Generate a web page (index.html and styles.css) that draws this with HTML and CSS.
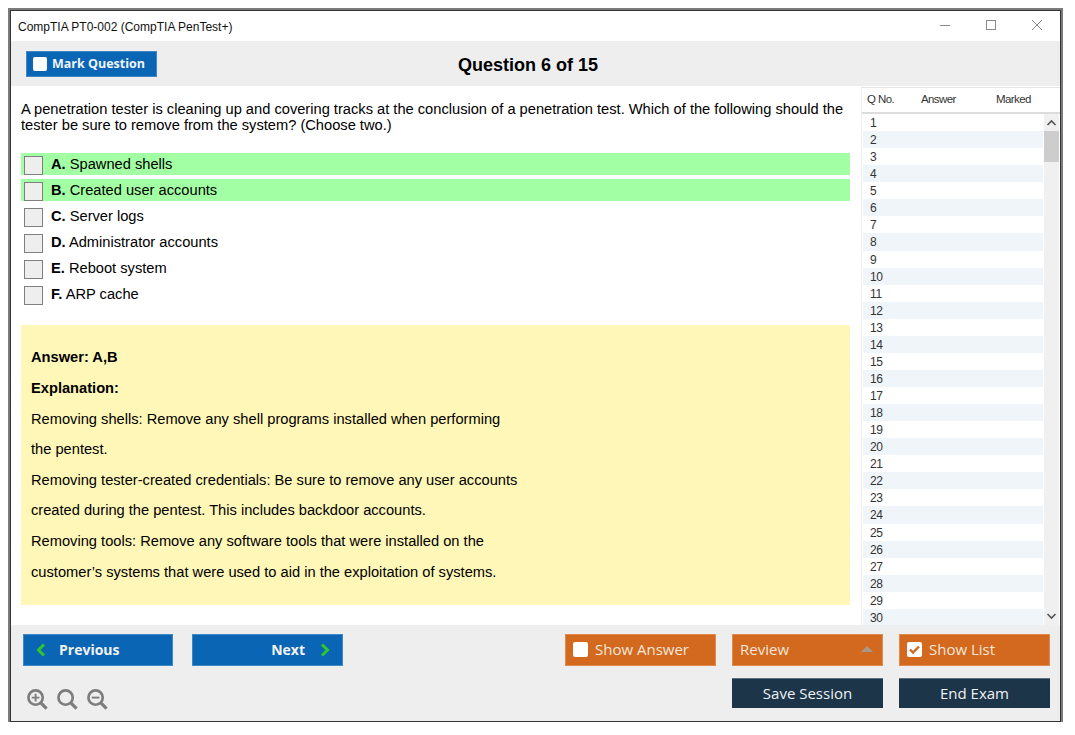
FILE: index.html
```html
<!DOCTYPE html>
<html lang="en">
<head>
<meta charset="utf-8">
<title>CompTIA PT0-002</title>
<link rel="stylesheet" href="styles.css">
</head>
<body>
<div class="window">
  <header class="titlebar">
    <span class="title-text">CompTIA PT0-002 (CompTIA PenTest+)</span>
    <div class="win-controls">
      <svg width="12" height="12" viewBox="0 0 12 12"><path d="M1 6.500h10" stroke="#8a8a8a" fill="none"/></svg>
      <svg width="12" height="12" viewBox="0 0 12 12"><rect x="1.500" y="1.500" width="9" height="9" stroke="#8a8a8a" fill="none"/></svg>
      <svg width="12" height="12" viewBox="0 0 12 12"><path d="M1 1l10 10M11 1L1 11" stroke="#8a8a8a" fill="none"/></svg>
    </div>
  </header>
  <div class="toolbar">
    <div class="mark-btn"><span class="tick-box"></span>Mark Question</div>
    <h1 class="q-title">Question 6 of 15</h1>
  </div>
  <div class="content">
    <main class="main">
      <p class="question">A penetration tester is cleaning up and covering tracks at the conclusion of a penetration test. Which of the following should the tester be sure to remove from the system? (Choose two.)</p>
      <div class="options">
        <div class="option correct"><span class="box"></span><span><b>A.</b> Spawned shells</span></div>
        <div class="option correct"><span class="box"></span><span><b>B.</b> Created user accounts</span></div>
        <div class="option"><span class="box"></span><span><b>C.</b> Server logs</span></div>
        <div class="option"><span class="box"></span><span><b>D.</b> Administrator accounts</span></div>
        <div class="option"><span class="box"></span><span><b>E.</b> Reboot system</span></div>
        <div class="option"><span class="box"></span><span><b>F.</b> ARP cache</span></div>
      </div>
      <section class="answer">
        <p><b>Answer: A,B</b></p>
        <p><b>Explanation:</b></p>
        <p>Removing shells: Remove any shell programs installed when performing</p>
        <p>the pentest.</p>
        <p>Removing tester-created credentials: Be sure to remove any user accounts</p>
        <p>created during the pentest. This includes backdoor accounts.</p>
        <p>Removing tools: Remove any software tools that were installed on the</p>
        <p>customer’s systems that were used to aid in the exploitation of systems.</p>
      </section>
    </main>
    <aside class="side">
      <div class="side-head"><span class="c1">Q No.</span><span class="c2">Answer</span><span class="c3">Marked</span></div>
      <div class="side-body">
        <div class="rows">
          <div class="row">1</div><div class="row">2</div><div class="row">3</div><div class="row">4</div><div class="row">5</div>
          <div class="row">6</div><div class="row">7</div><div class="row">8</div><div class="row">9</div><div class="row">10</div>
          <div class="row">11</div><div class="row">12</div><div class="row">13</div><div class="row">14</div><div class="row">15</div>
          <div class="row">16</div><div class="row">17</div><div class="row">18</div><div class="row">19</div><div class="row">20</div>
          <div class="row">21</div><div class="row">22</div><div class="row">23</div><div class="row">24</div><div class="row">25</div>
          <div class="row">26</div><div class="row">27</div><div class="row">28</div><div class="row">29</div><div class="row">30</div>
        </div>
        <div class="scrollbar">
          <svg class="arrow" width="15" height="17" viewBox="0 0 15 17"><path d="M3.500 11L7.500 7l4 4" stroke="#555" stroke-width="1.600" fill="none"/></svg>
          <div class="thumb"></div>
          <div class="track"></div>
          <svg class="arrow" width="15" height="17" viewBox="0 0 15 17"><path d="M3.500 6l4 4 4-4" stroke="#555" stroke-width="1.600" fill="none"/></svg>
        </div>
      </div>
    </aside>
  </div>
  <footer class="bottom">
    <div class="left-col">
      <div class="nav">
        <div class="btn blue prev">
          <svg width="12" height="16" viewBox="0 0 12 16"><path d="M9 2.500L3.500 8 9 13.500" stroke="#2fc72a" stroke-width="3" fill="none"/></svg>
          <span>Previous</span>
        </div>
        <div class="btn blue next">
          <span>Next</span>
          <svg width="12" height="16" viewBox="0 0 12 16"><path d="M3 2.500L8.500 8 3 13.500" stroke="#2fc72a" stroke-width="3" fill="none"/></svg>
        </div>
      </div>
      <div class="zoom">
        <svg width="21" height="21" viewBox="0 0 22 22"><g stroke="#7d7d7d" fill="none"><circle cx="9" cy="9" r="7.500" stroke-width="2.800"/><path d="M14.500 14.500L20.500 20.500" stroke-width="3.400"/><path d="M5 9h8M9 5v8" stroke-width="2"/></g></svg>
        <svg width="21" height="21" viewBox="0 0 22 22"><g stroke="#7d7d7d" fill="none"><circle cx="9" cy="9" r="7.500" stroke-width="2.800"/><path d="M14.500 14.500L20.500 20.500" stroke-width="3.400"/></g></svg>
        <svg width="21" height="21" viewBox="0 0 22 22"><g stroke="#7d7d7d" fill="none"><circle cx="9" cy="9" r="7.500" stroke-width="2.800"/><path d="M14.500 14.500L20.500 20.500" stroke-width="3.400"/><path d="M5 9h8" stroke-width="2"/></g></svg>
      </div>
    </div>
    <div class="right-grid">
      <div class="btn orange"><span class="tick-box big"></span>Show Answer</div>
      <div class="btn orange review">Review<span class="caret"></span></div>
      <div class="btn orange"><span class="tick-box big"><svg width="15" height="15" viewBox="0 0 15 15"><path d="M3 7.500l3 3 6-6" stroke="#d2691f" stroke-width="2.400" fill="none"/></svg></span>Show List</div>
      <div class="btn navy slot2">Save Session</div>
      <div class="btn navy">End Exam</div>
    </div>
  </footer>
</div>
</body>
</html>
```
FILE: styles.css
```css
* { box-sizing: border-box; }
html, body { margin: 0; padding: 0; background: #fff; }
body { padding: 10px 0 0 10px; font-family: "Liberation Sans", Arial, sans-serif; color: #000; }
p, h1 { margin: 0; }

.window {
  width: 1051px;
  height: 712px;
  border: 1px solid #333;
  outline: 2px solid #7b7b7b;
  display: flex;
  flex-direction: column;
  background: #fff;
}

.titlebar {
  height: 30px;
  flex: none;
  display: flex;
  align-items: center;
  justify-content: space-between;
  padding-left: 7px;
}
.title-text { font-size: 12px; color: #111; padding-top: 2px; }
.win-controls { display: flex; gap: 34px; padding-right: 17px; margin-bottom: 2px; }

.toolbar {
  height: 45px;
  flex: none;
  background: #eeeeee;
  display: flex;
  align-items: center;
  padding-left: 15px;
}
.mark-btn {
  width: 131px;
  height: 26px;
  margin-top: 1px;
  background: #0a66b4;
  border: 1px solid #3f87c5;
  color: #f0f4fa;
  font: 700 12.500px/24px "Open Sans", sans-serif;
  display: flex;
  align-items: center;
  padding-left: 6px;
}
.tick-box {
  width: 14px;
  height: 14px;
  background: #fff;
  border-radius: 2px;
  margin-right: 5px;
  flex: none;
}
.q-title { margin: 3px 0 0 301px; font-size: 18px; font-weight: 700; line-height: 22px; }

.content { flex: 1; min-height: 0; display: flex; }
.main { width: 850px; flex: none; padding: 15px 0 0 10px; }
.question { font-size: 14.670px; line-height: 16px; width: 829px; }

.options { margin-top: 20px; display: flex; flex-direction: column; gap: 4px; width: 829px; }
.option {
  height: 22px;
  display: flex;
  align-items: flex-start;
  font-size: 14.670px;
  line-height: 22px;
}
.option.correct { background: #a3ffa3; }
.box {
  width: 19px;
  height: 19px;
  margin: 3px 8px 0 3px;
  border: 1px solid #7f7f7f;
  background: #eeeeee;
  flex: none;
}

.answer {
  margin-top: 20px;
  width: 829px;
  height: 280px;
  background: #fff7b7;
  padding: 17.400px 10px 0;
  font-size: 14.670px;
  line-height: 30.600px;
}

.side { flex: 1; background: #fff; display: flex; flex-direction: column; border-left: 1px solid #eee; }
.side-head {
  height: 27px;
  flex: none;
  margin-top: 1px;
  padding-bottom: 2px;
  border-top: 1px solid #e4e4e4;
  border-bottom: 2px solid #dcdcdc;
  font-size: 11.500px;
  letter-spacing: -0.600px;
  color: #333;
  display: flex;
  align-items: center;
  padding-left: 5px;
}
.c1 { width: 54px; }
.c2 { width: 75px; }
.side-body { flex: 1; min-height: 0; display: flex; overflow: hidden; }
.rows { width: 181px; flex: none; padding-left: 1px; }
.row {
  height: 17.070px;
  font-size: 12px;
  line-height: 19px;
  letter-spacing: -0.300px;
  padding-left: 7px;
  color: #333;
}
.row:nth-child(even) { background: #f0f5f9; }
.scrollbar { width: 15px; margin-left: 1px; background: #f0f0f0; display: flex; flex-direction: column; }
.arrow { flex: none; display: block; }
.thumb { height: 31px; flex: none; background: #cdcdcd; }
.track { flex: 1; }

.bottom {
  height: 96px;
  flex: none;
  background: #eeeeee;
  display: flex;
  justify-content: space-between;
  padding: 9px 10px 0 12px;
}
.left-col { display: flex; flex-direction: column; }
.nav { display: flex; gap: 19px; }
.btn {
  display: flex;
  align-items: center;
  font-family: "Open Sans", sans-serif;
  font-size: 15px;
  color: #f2f2f2;
}
.blue {
  height: 32px;
  background: #0a66b4;
  border: 1px solid #3f87c5;
  font-size: 14px;
  font-weight: 700;
}
.blue span { padding-bottom: 2px; }
.prev { width: 150px; padding-left: 11px; gap: 12px; }
.next { width: 151px; justify-content: flex-end; padding-right: 11px; gap: 14px; }
.zoom { display: flex; gap: 9px; margin-top: 23px; padding-left: 4px; }

.right-grid {
  display: grid;
  grid-template-columns: repeat(3, 151px);
  grid-template-rows: 32px 30px;
  column-gap: 16px;
  row-gap: 12px;
}
.orange {
  background: #d2691f;
  border: 1px solid #e08a50;
  padding-left: 7px;
  padding-bottom: 2px;
  color: #f5e6da;
}
.tick-box.big { width: 15px; height: 15px; margin: 1px 7px 0 0; display: flex; }
.review { justify-content: space-between; padding-right: 9px; }
.caret {
  width: 0;
  height: 0;
  border: 6px solid transparent;
  border-top: 0;
  border-bottom: 6px solid #a8988c;
}
.navy {
  background: #1c3549;
  border-top: 1px solid #5d7080;
  padding-bottom: 2px;
  justify-content: center;
  color: #eef1f4;
}
.slot2 { grid-column: 2; }
```
